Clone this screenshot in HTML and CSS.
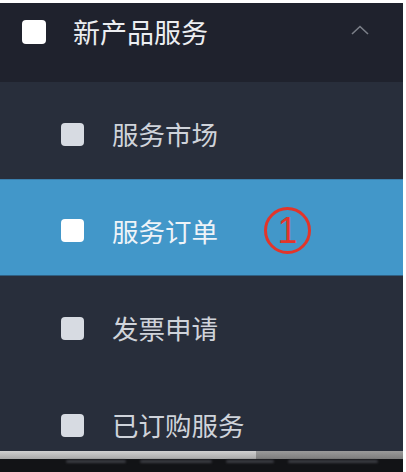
FILE: index.html
```html
<!DOCTYPE html>
<html lang="zh-CN">
<head>
<meta charset="utf-8">
<link rel="stylesheet" href="styles.css">
</head>
<body>
<div class="panel">
  <div class="header">
    <span class="box box-head"></span>
    <span class="head-title">新产品服务</span>
    <svg class="chev" width="18" height="10" viewBox="0 0 18 10"><path d="M1 9 L9 1.5 L17 9" fill="none" stroke="#7b7f88" stroke-width="1.6"/></svg>
  </div>
  <div class="sub">
    <div class="row"><span class="box"></span><span class="label">服务市场</span></div>
    <div class="row active"><span class="box"></span><span class="label">服务订单</span><span class="mark">1</span></div>
    <div class="row"><span class="box"></span><span class="label">发票申请</span></div>
    <div class="row last"><span class="box"></span><span class="label">已订购服务</span></div>
    <div class="scroll"><span class="thumb"></span></div>
    <div class="below">
      <span class="smudge s1"></span>
      <span class="smudge s2"></span>
      <span class="smudge s3"></span>
      <span class="smudge s4"></span>
    </div>
  </div>
</div>
</body>
</html>
```
FILE: styles.css
```css
html, body {
  margin: 0;
  padding: 0;
  background: #ffffff;
  overflow: hidden;
}
body {
  font-family: "Noto Sans CJK SC", "Noto Sans", sans-serif;
  width: 406px;
  height: 472px;
}
.panel {
  margin-top: 3px;
  width: 403px;
  height: 469px;
  overflow: hidden;
  background: #282e3b;
}
.header {
  height: 79px;
  background: #1f222d;
  display: flex;
  align-items: flex-start;
  padding-top: 16px;
  box-sizing: border-box;
  padding-left: 22px;
}
.box {
  width: 23px;
  height: 23px;
  border-radius: 4px;
  background: #d7dbe2;
  flex: none;
}
.box-head {
  width: 24px;
  height: 24px;
  margin-top: 1px;
  background: #ffffff;
}
.head-title {
  margin-left: 27px;
  font-size: 27px;
  line-height: 26px;
  color: #eceef1;
}
.chev {
  margin-left: auto;
  margin-right: 34px;
  margin-top: 6px;
}
.sub {
  display: flex;
  flex-direction: column;
}
.row {
  height: 97px;
  box-sizing: border-box;
  padding-top: 7px;
  padding-left: 61px;
  display: flex;
  align-items: center;
}
.label {
  margin-left: 28px;
  font-size: 26.5px;
  line-height: 28px;
  color: #cfd3da;
}
.active {
  background: #4297c9;
  border-top: 1px solid #3a7fad;
  border-bottom: 1px solid #2f5f82;
  padding-top: 6px;
}
.active .box {
  background: #ffffff;
}
.active .label {
  color: #eef3f8;
}
.mark {
  margin-left: 46px;
  width: 41px;
  height: 41px;
  border: 3px solid #e2352a;
  border-radius: 50%;
  color: #e2352a;
  font-family: "Liberation Sans", sans-serif;
  font-size: 36px;
  line-height: 41px;
  text-align: center;
  flex: none;
}
.last {
  height: 78px;
  padding-top: 26px;
}
.scroll {
  height: 8px;
  background: linear-gradient(#9a9a9a, #7c7c7c);
  display: flex;
}
.thumb {
  width: 256px;
  height: 8px;
  background: linear-gradient(#d0d0d0, #a8a8a8);
}
.below {
  height: 20px;
  background: #121316;
  display: flex;
  align-items: flex-start;
  gap: 14px;
  padding-left: 66px;
  padding-top: 1px;
  box-sizing: border-box;
}
.smudge {
  height: 3px;
  background: #3a3c42;
  border-radius: 2px;
  filter: blur(0.8px);
}
.s1 { width: 60px; }
.s2 { width: 72px; }
.s3 { width: 48px; }
.s4 { width: 90px; }
```
